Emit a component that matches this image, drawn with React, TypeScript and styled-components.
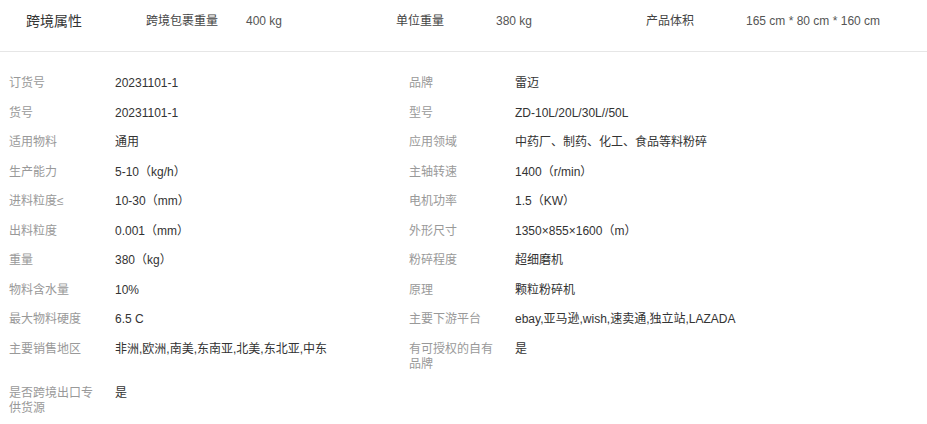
import styled, { createGlobalStyle } from "styled-components";

const GlobalStyle = createGlobalStyle`
    body {
        margin: 0;
        background: #fff;
        font-family: "Liberation Sans", "Noto Sans CJK SC", sans-serif;
        font-size: 12px;
        color: #333;
    }
`;

const Container = styled.div`
    width: 927px;
`;

const Header = styled.div`
    display: flex;
    align-items: center;
    border-bottom: 1px solid #e6e6e6;
    padding-left: 26px;
    padding-bottom: 11px;
    height: 40px;
`;

const Title = styled.div`
    width: 120px;
    font-size: 14px;
    color: #333;
`;

const HeadItem = styled.div`
    display: flex;
    align-items: baseline;
    width: 250px;
    line-height: 15px;
    padding-top: 2px;
`;

const HeadLabel = styled.span`
    width: 100px;
    color: #444;
`;

const HeadValue = styled.span`
    color: #555;
`;

const Grid = styled.div`
    display: grid;
    grid-template-columns: 400px 400px;
    padding: 17px 0 0 9px;
`;

const Cell = styled.div`
    display: flex;
    padding: 7.25px 0;
    line-height: 15px;
`;

const Label = styled.div`
    width: 90px;
    margin-right: 16px;
    flex-shrink: 0;
    color: #999;
`;

const Value = styled.div`
    color: #333;
`;

const header = [
    ["跨境包裹重量", "400 kg"],
    ["单位重量", "380 kg"],
    ["产品体积", "165 cm * 80 cm * 160 cm"],
];

const attrs = [
    ["订货号", "20231101-1"],
    ["品牌", "雷迈"],
    ["货号", "20231101-1"],
    ["型号", "ZD-10L/20L/30L//50L"],
    ["适用物料", "通用"],
    ["应用领域", "中药厂、制药、化工、食品等料粉碎"],
    ["生产能力", "5-10（kg/h）"],
    ["主轴转速", "1400（r/min）"],
    ["进料粒度≤", "10-30（mm）"],
    ["电机功率", "1.5（KW）"],
    ["出料粒度", "0.001（mm）"],
    ["外形尺寸", "1350×855×1600（m）"],
    ["重量", "380（kg）"],
    ["粉碎程度", "超细磨机"],
    ["物料含水量", "10%"],
    ["原理", "颗粒粉碎机"],
    ["最大物料硬度", "6.5 C"],
    ["主要下游平台", "ebay,亚马逊,wish,速卖通,独立站,LAZADA"],
    ["主要销售地区", "非洲,欧洲,南美,东南亚,北美,东北亚,中东"],
    ["有可授权的自有品牌", "是"],
    ["是否跨境出口专供货源", "是"],
];

const App = () => {
    return (
        <Container>
            <GlobalStyle />
            <Header>
                <Title>跨境属性</Title>
                {header.map(([k, v]) => (
                    <HeadItem key={k}>
                        <HeadLabel>{k}</HeadLabel>
                        <HeadValue>{v}</HeadValue>
                    </HeadItem>
                ))}
            </Header>
            <Grid>
                {attrs.map(([k, v]) => (
                    <Cell key={k}>
                        <Label>{k}</Label>
                        <Value>{v}</Value>
                    </Cell>
                ))}
            </Grid>
        </Container>
    );
};

export default App;
